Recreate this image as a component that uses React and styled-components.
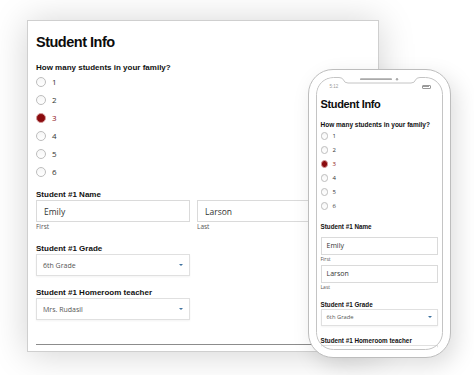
import React from 'react';
import styled, { createGlobalStyle } from 'styled-components';

const GlobalStyle = createGlobalStyle`
  html, body {
    margin: 0;
    padding: 0;
    background: #ffffff;
  }
  body {
    width: 474px;
    height: 375px;
    overflow: hidden;
    font-family: "Liberation Sans", Arial, sans-serif;
    color: #111;
  }
`;

// sizes for the desktop card and for the phone screen
const desk = {
  title: 14.5, titleLh: 16, titleLs: -0.5, titleMt: 0,
  q: 8, qLh: 10, qMt: 13,
  dot: 10, row: 18, opt: 8, optGap: 6,
  label: 8, labelLh: 8,
  nameMt: 10.5, nameMb: 1, gradeMt: 14, gradeMb: 1, teacherMt: 13, teacherMb: 1,
  box: 22, boxFont: 8.5, boxPad: 7,
  hint: 6.5, hintLh: 8, hintMt: 1,
  sel: 22, selFont: 7, selPad: 6, caret: 2.6,
};

const mob = {
  title: 11, titleLh: 13, titleLs: -0.35, titleMt: 5.5,
  q: 6.5, qLh: 8, qMt: 10,
  dot: 7.5, row: 14, opt: 6, optGap: 4.5,
  label: 6.3, labelLh: 7,
  nameMt: 10, nameMb: 6.5, gradeMt: 11.5, gradeMb: 0.5, teacherMt: 11.5, teacherMb: 1,
  box: 18, boxFont: 7, boxPad: 5,
  hint: 5, hintLh: 6, hintMt: 1,
  sel: 17, selFont: 5.8, selPad: 5, caret: 2.2,
};

const Stage = styled.div`
  position: relative;
  width: 474px;
  height: 375px;
  box-sizing: border-box;
  padding: 20px 0 0 27px;
`;

const Card = styled.div`
  width: 352px;
  box-sizing: border-box;
  background: #fff;
  border: 1px solid #cfcfcf;
  box-shadow: 0 2px 34px rgba(0, 0, 0, 0.18);
  padding: 12.5px 27px 6px 8px;
`;

const Title = styled.h1`
  margin: ${p => p.$s.titleMt}px 0 0;
  font-family: "Liberation Sans", Arial, sans-serif;
  font-weight: 700;
  font-size: ${p => p.$s.title}px;
  line-height: ${p => p.$s.titleLh}px;
  letter-spacing: ${p => p.$s.titleLs}px;
  color: #0c0c0c;
`;

const Question = styled.div`
  margin-top: ${p => p.$s.qMt}px;
  font-weight: 700;
  font-size: ${p => p.$s.q}px;
  line-height: ${p => p.$s.qLh}px;
  color: #111;
`;

const Options = styled.div`
  display: flex;
  flex-direction: column;
`;

const Option = styled.div`
  display: flex;
  align-items: center;
  gap: ${p => p.$s.optGap}px;
  height: ${p => p.$s.row}px;
  font-family: "Open Sans", "Liberation Sans", sans-serif;
  font-size: ${p => p.$s.opt}px;
  color: ${p => (p.$on ? '#8e0f12' : '#333')};
`;

const Dot = styled.span`
  flex: none;
  width: ${p => p.$s.dot}px;
  height: ${p => p.$s.dot}px;
  box-sizing: border-box;
  border-radius: 50%;
  border: 1px solid ${p => (p.$on ? '#d49a9a' : '#bdbdbd')};
  background: ${p => (p.$on ? '#8a0b0e' : 'linear-gradient(#f6f6f6, #ffffff)')};
`;

const Label = styled.div`
  margin-top: ${p => p.$mt}px;
  margin-bottom: ${p => p.$mb}px;
  font-weight: 700;
  font-size: ${p => p.$s.label}px;
  line-height: ${p => p.$s.labelLh}px;
  color: #111;
  white-space: nowrap;
`;

const NameRow = styled.div`
  display: grid;
  grid-template-columns: ${p => (p.$stacked ? '1fr' : '154px 154px')};
  column-gap: 7px;
  row-gap: 3px;
`;

const Field = styled.div`
  display: flex;
  flex-direction: column;
`;

const TextBox = styled.div`
  height: ${p => p.$s.box}px;
  box-sizing: border-box;
  display: flex;
  align-items: center;
  padding-left: ${p => p.$s.boxPad}px;
  border: 1px solid #dadada;
  background: #fff;
  font-family: "Open Sans", "Liberation Sans", sans-serif;
  font-size: ${p => p.$s.boxFont}px;
  color: #333;
`;

const Hint = styled.div`
  margin-top: ${p => p.$s.hintMt}px;
  font-family: "Open Sans", "Liberation Sans", sans-serif;
  font-size: ${p => p.$s.hint}px;
  line-height: ${p => p.$s.hintLh}px;
  color: #555;
`;

const Select = styled.div`
  width: ${p => (p.$full ? '100%' : '154px')};
  height: ${p => p.$s.sel}px;
  box-sizing: border-box;
  display: flex;
  align-items: center;
  justify-content: space-between;
  padding: 0 ${p => p.$s.selPad}px;
  border: 1px solid #e0e0e0;
  box-shadow: 0 1px 2px rgba(0, 0, 0, 0.05);
  background: #fff;
  font-family: "Open Sans", "Liberation Sans", sans-serif;
  font-size: ${p => p.$s.selFont}px;
  color: #555;
`;

const Caret = styled.span`
  width: 0;
  height: 0;
  border-left: ${p => p.$s.caret}px solid transparent;
  border-right: ${p => p.$s.caret}px solid transparent;
  border-top: ${p => p.$s.caret * 1.1}px solid #3f73a0;
`;

const Rule = styled.div`
  margin-top: 24px;
  height: 1px;
  background: #8c8c8c;
`;

const Phone = styled.div`
  position: absolute;
  left: 308px;
  top: 69px;
  width: 143px;
  height: 289px;
  box-sizing: border-box;
  padding: 6.5px;
  border: 1.5px solid #bdbdbd;
  border-radius: 25px;
  background: #fff;
  box-shadow: 6px 8px 22px rgba(0, 0, 0, 0.13);
`;

const Screen = styled.div`
  position: relative;
  height: 100%;
  border-radius: 17px;
  overflow: hidden;
`;

const ScreenBody = styled.div`
  padding: 0 6px 0 5px;
`;

const StatusBar = styled.div`
  height: 16px;
  box-sizing: border-box;
  padding: 4px 13px 0 14px;
  display: flex;
  justify-content: space-between;
  align-items: center;
  font-size: 4.5px;
  line-height: 8px;
  color: #999;
`;

const Battery = styled.span`
  width: 9px;
  height: 4px;
  box-sizing: border-box;
  border: 0.8px solid #9a9a9a;
  border-radius: 1px;
  padding: 0.6px;
  display: flex;
  &::before {
    content: '';
    flex: 1;
    background: #9a9a9a;
  }
`;

const Outline = styled.svg`
  position: absolute;
  left: 0;
  top: 0;
  pointer-events: none;
`;

function StudentForm({ s, stacked }) {
  return (
    <>
      <Title $s={s}>Student Info</Title>
      <Question $s={s}>How many students in your family?</Question>
      <Options>
        {[1, 2, 3, 4, 5, 6].map(n => (
          <Option key={n} $s={s} $on={n === 3}>
            <Dot $s={s} $on={n === 3} />
            {n}
          </Option>
        ))}
      </Options>
      <Label $s={s} $mt={s.nameMt} $mb={s.nameMb}>Student #1 Name</Label>
      <NameRow $stacked={stacked}>
        <Field>
          <TextBox $s={s}>Emily</TextBox>
          <Hint $s={s}>First</Hint>
        </Field>
        <Field>
          <TextBox $s={s}>Larson</TextBox>
          <Hint $s={s}>Last</Hint>
        </Field>
      </NameRow>
      <Label $s={s} $mt={s.gradeMt} $mb={s.gradeMb}>Student #1 Grade</Label>
      <Select $s={s} $full={stacked}>
        <span>6th Grade</span>
        <Caret $s={s} />
      </Select>
      <Label $s={s} $mt={s.teacherMt} $mb={s.teacherMb}>Student #1 Homeroom teacher</Label>
      {/* on the phone this select is scrolled below the screen edge */}
      <Select $s={s} $full={stacked}>
        {!stacked && <span>Mrs. Rudasil</span>}
        {!stacked && <Caret $s={s} />}
      </Select>
    </>
  );
}

const App = () => {
  return (
    <Stage>
      <GlobalStyle />
      <Card>
        <StudentForm s={desk} />
        <Rule />
      </Card>

      <Phone>
        <Screen>
          <StatusBar>
            <span>5:12</span>
            <Battery />
          </StatusBar>
          <ScreenBody>
            <StudentForm s={mob} stacked />
          </ScreenBody>
          <Outline width="127" height="273" viewBox="0 0 127 273">
            <path
              d="M0.5,17.5 A17,17 0 0 1 17.5,0.5 L23,0.5 Q26.5,0.5 27.5,3 Q28.5,6 32,6 L95,6 Q98.5,6 99.5,3 Q100.5,0.5 104,0.5 L109.5,0.5 A17,17 0 0 1 126.5,17.5 L126.5,255.5 A17,17 0 0 1 109.5,272.5 L17.5,272.5 A17,17 0 0 1 0.5,255.5 Z"
              fill="none"
              stroke="#c4c4c4"
              strokeWidth="1"
            />
            <rect x="44" y="1.3" width="32" height="1.8" rx="0.9" fill="#a9a9a9" />
            <circle cx="81" cy="2.2" r="1.2" fill="#a9a9a9" />
          </Outline>
        </Screen>
      </Phone>
    </Stage>
  );
};

export default App;
